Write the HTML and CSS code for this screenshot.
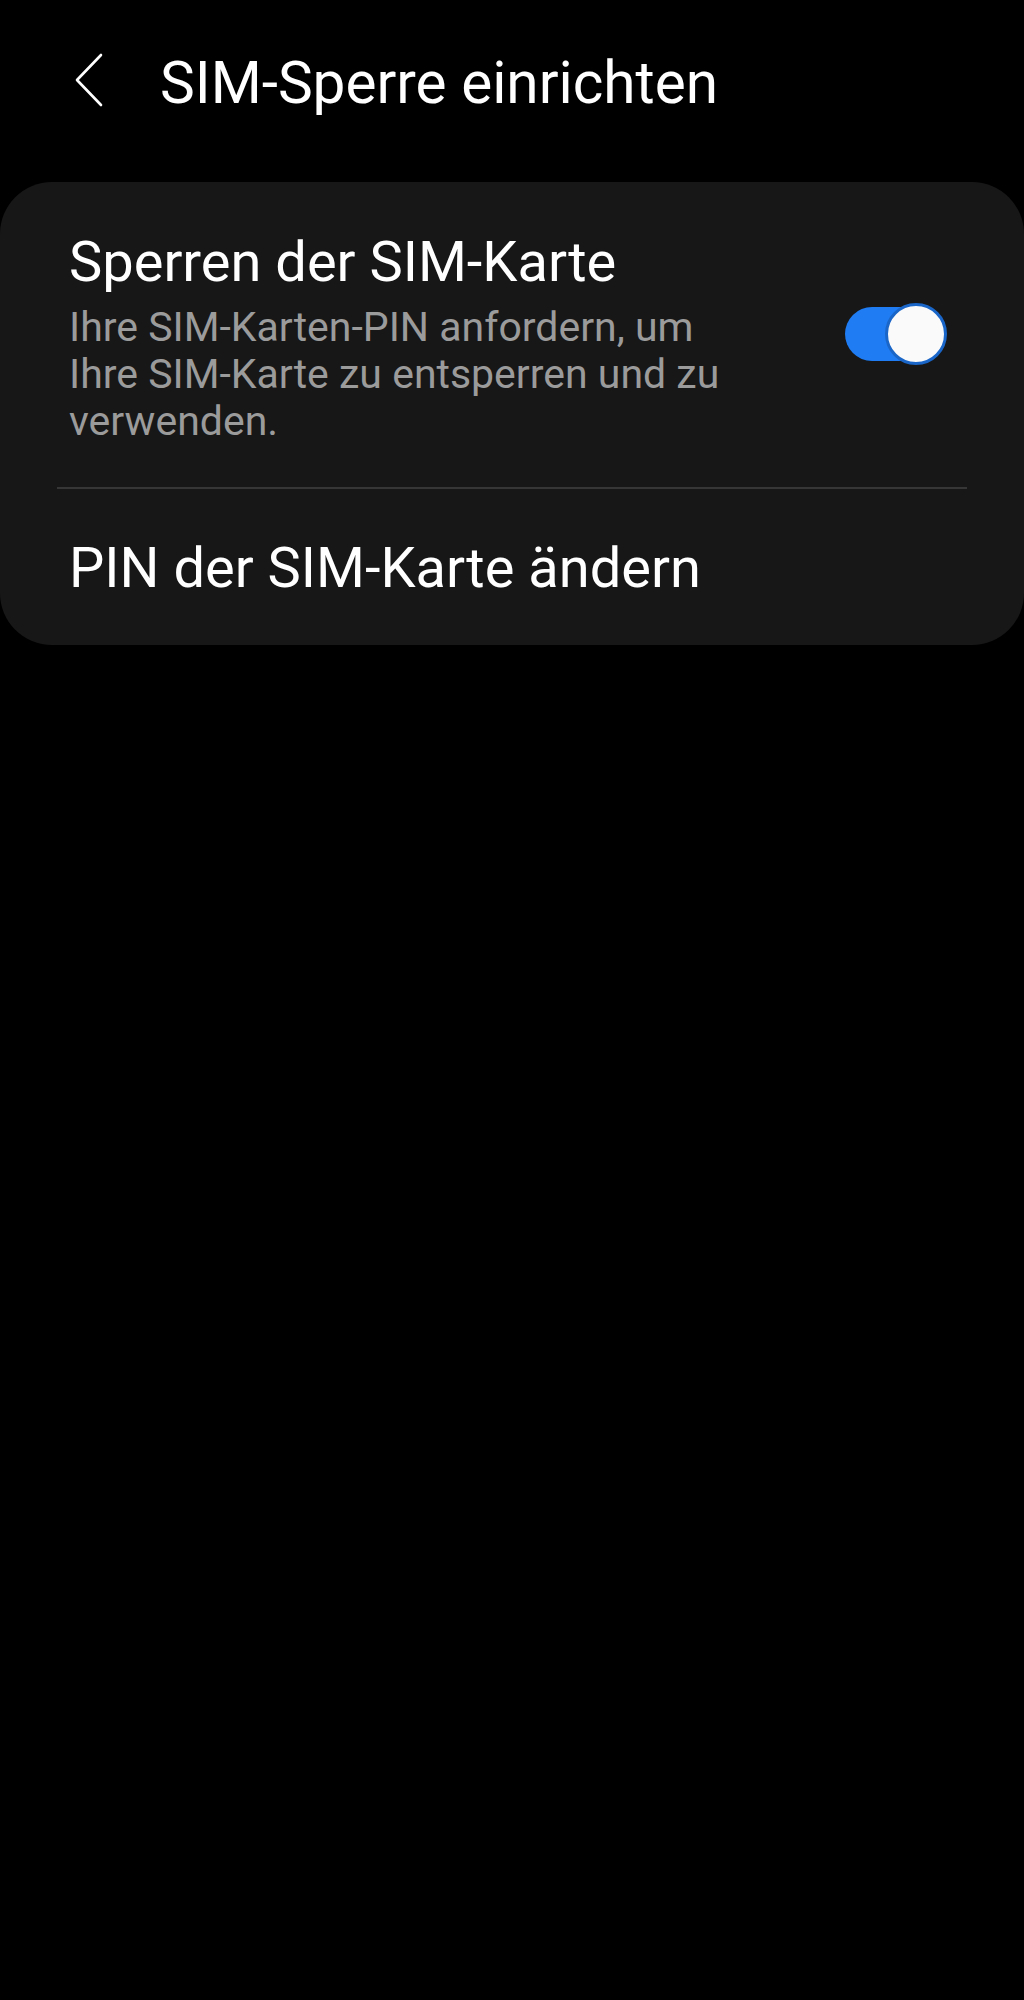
FILE: index.html
```html
<!DOCTYPE html>
<html lang="de">
<head>
<meta charset="UTF-8">
<meta name="viewport" content="width=device-width, initial-scale=1.0">
<title>SIM-Sperre einrichten</title>
<link rel="stylesheet" href="styles.css">
</head>
<body>
<div class="header">
    <svg class="back" width="30" height="54" viewBox="0 0 30 54">
        <path d="M27 2 L3 27 L27 52" fill="none" stroke="#fff" stroke-width="2.6" stroke-linecap="round" stroke-linejoin="round"/>
    </svg>
    <h1 class="title">SIM-Sperre einrichten</h1>
</div>

<div class="card">
    <div class="row row-toggle">
        <div class="text">
            <div class="label">Sperren der SIM-Karte</div>
            <div class="desc">Ihre SIM-Karten-PIN anfordern, um Ihre SIM-Karte zu entsperren und zu verwenden.</div>
        </div>
        <div class="switch">
            <div class="track"></div>
            <div class="thumb"></div>
        </div>
    </div>
    <hr class="divider">
    <div class="row row-plain">
        <div class="label">PIN der SIM-Karte ändern</div>
    </div>
</div>
</body>
</html>
```

FILE: styles.css
```css
body {
    margin: 0;
    padding: 0;
    background-color: #000;
    font-family: Roboto, "Noto Sans", sans-serif;
    color: #fff;
}
.header {
    display: flex;
    align-items: flex-start;
    height: 182px;
    box-sizing: border-box;
    padding: 53px 0 0 74px;
}
.back {
    display: block;
    margin-right: 56px;
}
.title {
    margin: 0;
    margin-top: -10px;
    font-size: 58.5px;
    font-weight: 400;
    line-height: 80px;
}
.card {
    background-color: #171717;
    border-radius: 52px;
    padding-bottom: 45px;
}
.row {
    padding: 0 69px;
}
.row-toggle {
    display: flex;
    align-items: center;
    justify-content: space-between;
    padding-top: 48px;
    padding-bottom: 42px;
    padding-right: 77px;
}
.label {
    font-size: 56px;
    line-height: 64px;
}
.desc {
    margin-top: 10px;
    width: 680px;
    font-size: 41px;
    line-height: 47px;
    color: #9b9b9b;
}
.switch {
    position: relative;
    flex-shrink: 0;
    width: 102px;
    height: 64px;
    margin-bottom: 8px;
}
.track {
    position: absolute;
    left: 0;
    top: 5px;
    width: 96px;
    height: 54px;
    border-radius: 27px;
    background-color: #1f7cf2;
}
.thumb {
    position: absolute;
    right: 0;
    top: 1px;
    width: 56px;
    height: 56px;
    border-radius: 50%;
    background-color: #fafafa;
    border: 3px solid #1a66c8;
}
.divider {
    margin: 0 57px;
    border: none;
    height: 2px;
    background-color: #363636;
}
.row-plain {
    padding-top: 47px;
}
```
